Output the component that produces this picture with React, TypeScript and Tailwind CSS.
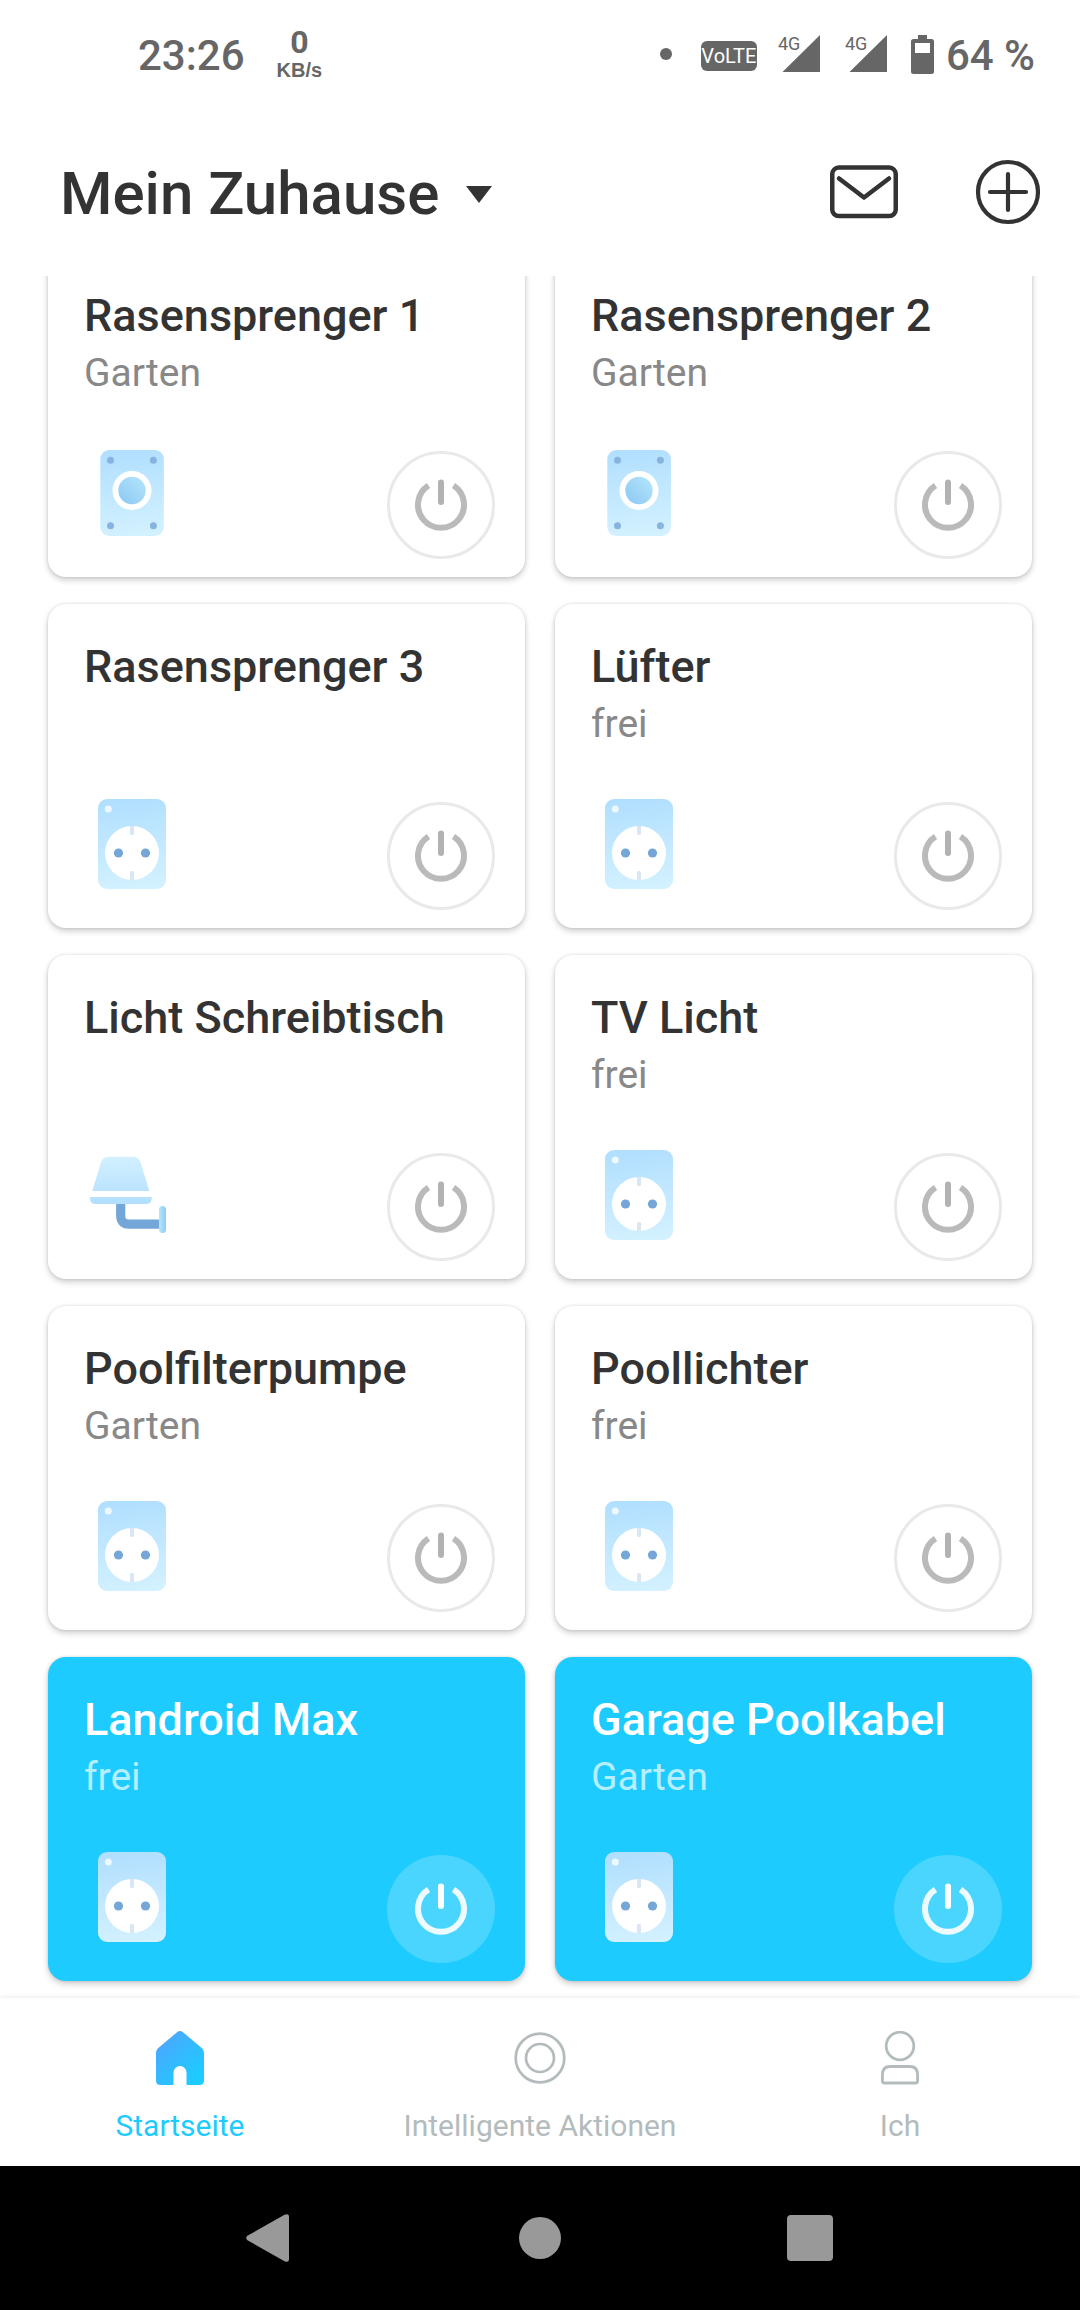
import { useId, useState } from 'react'
import type { ReactNode } from 'react'

type DeviceKind = 'switch' | 'socket' | 'lamp'

interface Device {
  name: string
  room?: string
  kind: DeviceKind
  on?: boolean
}

const DEVICES: Device[] = [
  { name: 'Rasensprenger 1', room: 'Garten', kind: 'switch' },
  { name: 'Rasensprenger 2', room: 'Garten', kind: 'switch' },
  { name: 'Rasensprenger 3', kind: 'socket' },
  { name: 'Lüfter', room: 'frei', kind: 'socket' },
  { name: 'Licht Schreibtisch', kind: 'lamp' },
  { name: 'TV Licht', room: 'frei', kind: 'socket' },
  { name: 'Poolfilterpumpe', room: 'Garten', kind: 'socket' },
  { name: 'Poollichter', room: 'frei', kind: 'socket' },
  { name: 'Landroid Max', room: 'frei', kind: 'socket', on: true },
  { name: 'Garage Poolkabel', room: 'Garten', kind: 'socket', on: true },
]

function SwitchIcon() {
  const id = useId()
  return (
    <svg viewBox="0 0 96 96" className="size-24" aria-hidden="true">
      <defs>
        <linearGradient id={`${id}a`} x1="0.45" y1="0" x2="0.55" y2="1">
          <stop offset="0" stopColor="#b1dfff" />
          <stop offset="1" stopColor="#d3f1ff" />
        </linearGradient>
        <linearGradient id={`${id}b`} x1="1" y1="0" x2="0.1" y2="0.9">
          <stop offset="0" stopColor="#b5e6fb" />
          <stop offset="1" stopColor="#90cbf4" />
        </linearGradient>
      </defs>
      <rect x="16.3" y="5" width="63.6" height="86" rx="9" fill={`url(#${id}a)`} />
      <g fill="#86b3e0">
        <circle cx="26.5" cy="15.3" r="3.5" />
        <circle cx="69.4" cy="15.3" r="3.5" />
        <circle cx="26.5" cy="80.7" r="3.5" />
        <circle cx="69.4" cy="80.7" r="3.5" />
      </g>
      <circle cx="48" cy="45.5" r="19.5" fill="#fff" />
      <circle cx="48" cy="45.5" r="13.7" fill={`url(#${id}b)`} />
    </svg>
  )
}

function SocketIcon() {
  const id = useId()
  return (
    <svg viewBox="0 0 96 96" className="size-24" aria-hidden="true">
      <defs>
        <linearGradient id={id} x1="0.45" y1="0" x2="0.55" y2="1">
          <stop offset="0" stopColor="#b1dfff" />
          <stop offset="1" stopColor="#d3f1ff" />
        </linearGradient>
      </defs>
      <rect x="14" y="3" width="68" height="90" rx="9" fill={`url(#${id})`} />
      <circle cx="24.3" cy="13" r="3.5" fill="#edf8ff" />
      <circle cx="48" cy="57" r="27" fill="#fff" />
      <path
        d="M46 30h4v7.5a1.5 1.5 0 0 1-1.5 1.5h-1a1.5 1.5 0 0 1-1.5-1.5zM46 84h4v-7.5a1.5 1.5 0 0 0-1.5-1.5h-1a1.5 1.5 0 0 0-1.5 1.5z"
        fill="#d8e6f5"
      />
      <circle cx="34.5" cy="57" r="4.6" fill="#74a6d8" />
      <circle cx="61.5" cy="57" r="4.6" fill="#74a6d8" />
    </svg>
  )
}

function LampIcon() {
  const id = useId()
  return (
    <svg viewBox="0 0 96 96" className="size-24" aria-hidden="true">
      <defs>
        <linearGradient id={`${id}a`} x1="0" y1="9" x2="0" y2="57" gradientUnits="userSpaceOnUse">
          <stop offset="0" stopColor="#d3f1ff" />
          <stop offset="1" stopColor="#b1dfff" />
        </linearGradient>
        <linearGradient id={`${id}b`} x1="0" y1="0" x2="1" y2="0">
          <stop offset="0" stopColor="#b5e6fb" />
          <stop offset="1" stopColor="#90cbf4" />
        </linearGradient>
      </defs>
      <path d="M8.3 44 17 15.5Q18.7 9.7 25 9.7H48.5Q54.8 9.7 56.6 15.5L65.3 44z" fill={`url(#${id}a)`} />
      <path d="M6 50H67.7V51.5Q67.7 57 62 57H12Q6 57 6 51.5z" fill={`url(#${id}a)`} />
      <path d="M36.7 57V68.5Q36.7 77.1 45 77.1H76" fill="none" stroke="#74a6d8" strokeWidth="9.2" />
      <rect x="75" y="59" width="7" height="27" rx="3.5" fill={`url(#${id}b)`} />
    </svg>
  )
}

const DEVICE_ICONS: Record<DeviceKind, () => ReactNode> = {
  switch: SwitchIcon,
  socket: SocketIcon,
  lamp: LampIcon,
}

function PowerIcon() {
  return (
    <svg viewBox="-27 -27 54 54" className="size-[54px]" fill="none" stroke="currentColor" strokeWidth="6" aria-hidden="true">
      <path d="M-12.5-19.5A23 23 0 1 0 12.5-19.5" opacity="0.9" />
      <path d="M0-22.5V-3" strokeLinecap="round" />
    </svg>
  )
}

function DeviceCard({ device }: { device: Device }) {
  const [on, setOn] = useState(Boolean(device.on))
  const Icon = DEVICE_ICONS[device.kind]

  return (
    <article
      className={`flex min-h-[324px] flex-col justify-between rounded-[18px] pt-[33px] shadow-[0_0_3px_rgba(0,0,0,0.12),0_3px_6px_rgba(0,0,0,0.2)] ${
        on ? 'bg-[#1dcbff]' : 'bg-white'
      }`}
    >
      <div className="px-9">
        <h2 className={`text-[45px] leading-[60px] font-medium ${on ? 'text-white' : 'text-[#333333]'}`}>
          {device.name}
        </h2>
        {device.room && (
          <p className={`text-[39px] leading-[54px] ${on ? 'text-[#b4eeff]' : 'text-[#888888]'}`}>{device.room}</p>
        )}
      </div>
      <div className="flex items-end justify-between pr-[30px] pb-[18px] pl-9">
        <div className="pb-[18px]">
          <Icon />
        </div>
        <button
          type="button"
          aria-label={`${device.name} ein/aus`}
          aria-pressed={on}
          onClick={() => setOn(!on)}
          className={`flex size-[108px] items-center justify-center rounded-full ${
            on ? 'bg-[#4ad5ff] text-white' : 'border-3 border-[#e8eaea] text-[#b2b2b2]'
          }`}
        >
          <PowerIcon />
        </button>
      </div>
    </article>
  )
}

function SignalIcon() {
  return (
    <div className="relative h-[38px] w-[42px]">
      <svg viewBox="0 0 42 38" className="h-[38px] w-[42px]" aria-hidden="true">
        <path d="M42 0V37H4.5z" fill="#666666" />
      </svg>
      <span className="absolute top-0 left-0 text-[18px] leading-[18px]">4G</span>
    </div>
  )
}

function StatusBar() {
  return (
    <div className="flex h-[108px] items-center justify-between pr-[45px] pl-[138px] text-[#666666]">
      <div className="flex items-center gap-8">
        <span className="pt-1 text-[42px] leading-[54px] font-medium">23:26</span>
        <div className="flex flex-col items-center pb-1 font-bold">
          <span className="text-[32px] leading-[36px]">0</span>
          <span className="font-['Liberation_Sans',sans-serif] text-[20px] leading-[20px]">KB/s</span>
        </div>
      </div>
      <div className="flex items-center">
        <span className="mr-[29px] size-3 rounded-full bg-[#666666]" />
        <span className="mt-1 mr-[21px] flex h-[30px] w-14 items-center justify-center rounded-md bg-[#666666] text-[20px] leading-[30px] text-white">
          VoLTE
        </span>
        <div className="mr-6 flex gap-[25px]">
          <SignalIcon />
          <SignalIcon />
        </div>
        <svg viewBox="0 0 23 39" className="mr-3 h-[39px] w-[23px]" aria-hidden="true">
          <path
            fillRule="evenodd"
            d="M7 0h9v4h4.5A2.5 2.5 0 0 1 23 6.5v30a2.5 2.5 0 0 1-2.5 2.5h-18A2.5 2.5 0 0 1 0 36.5v-30A2.5 2.5 0 0 1 2.5 4H7zM4 8v10h15V8z"
            fill="#666666"
          />
        </svg>
        <span className="pt-1 text-[42px] leading-[54px] font-medium">64 %</span>
      </div>
    </div>
  )
}

function Header() {
  return (
    <header className="flex h-[168px] items-center justify-between pr-[39px] pl-[60px] text-[#333333]">
      <button type="button" className="flex items-center gap-[27px] pt-1">
        <h1 className="text-[60px] leading-[72px] font-medium">Mein Zuhause</h1>
        <svg viewBox="0 0 26 17" className="h-[17px] w-[26px]" aria-hidden="true">
          <path d="M0 0h26L13 17z" fill="currentColor" />
        </svg>
      </button>
      <div className="flex items-center gap-[77px]">
        <button type="button" aria-label="Nachrichten">
          <svg
            viewBox="0 0 68 54"
            className="h-[54px] w-[68px]"
            fill="none"
            stroke="currentColor"
            strokeWidth="4.5"
            strokeLinecap="round"
            strokeLinejoin="round"
            aria-hidden="true"
          >
            <rect x="2.25" y="2.6" width="63.5" height="48.5" rx="6.5" />
            <path d="M9 13.5 34 32.5 59 13.5" />
          </svg>
        </button>
        <button type="button" aria-label="Hinzufügen">
          <svg
            viewBox="-33 -33 66 66"
            className="size-[66px]"
            fill="none"
            stroke="currentColor"
            strokeWidth="4.2"
            strokeLinecap="round"
            aria-hidden="true"
          >
            <circle r="30" />
            <path d="M-18 0H18M0-18V18" />
          </svg>
        </button>
      </div>
    </header>
  )
}

function HomeIcon() {
  const id = useId()
  return (
    <svg viewBox="0 0 54 54" className="size-[54px]" aria-hidden="true">
      <defs>
        <linearGradient id={id} x1="0.1" y1="0.1" x2="0.8" y2="0.9">
          <stop offset="0" stopColor="#4da6ff" />
          <stop offset="1" stopColor="#1dcbff" />
        </linearGradient>
      </defs>
      <path
        d="M24 1.2Q27-1 30 1.2L49 17.3Q51 19 51 22V49.5Q51 54 46.5 54H33.5V41.5A6.5 6.5 0 0 0 20.5 41.5V54H7.5Q3 54 3 49.5V22Q3 19 5 17.3z"
        fill={`url(#${id})`}
      />
    </svg>
  )
}

function ScenesIcon() {
  return (
    <svg viewBox="-27 -27 54 54" className="size-[54px]" fill="none" stroke="currentColor" strokeWidth="2.7" aria-hidden="true">
      <circle r="24.3" />
      <circle r="14" />
    </svg>
  )
}

function ProfileIcon() {
  return (
    <svg viewBox="0 0 54 54" className="size-[54px]" fill="none" stroke="currentColor" strokeWidth="2.8" aria-hidden="true">
      <circle cx="27" cy="15" r="13.8" />
      <path d="M17 35.5H37Q44.6 35.5 44.6 44V50Q44.6 52 42.6 52H11.4Q9.4 52 9.4 50V44Q9.4 35.5 17 35.5z" />
    </svg>
  )
}

const TABS = [
  { label: 'Startseite', icon: HomeIcon, active: true },
  { label: 'Intelligente Aktionen', icon: ScenesIcon, active: false },
  { label: 'Ich', icon: ProfileIcon, active: false },
]

function TabBar() {
  return (
    <nav className="relative grid h-[168px] grid-cols-3 bg-white shadow-[0_0_6px_rgba(0,0,0,0.1)]">
      {TABS.map(({ label, icon: Icon, active }) => (
        <a
          key={label}
          href="#"
          aria-current={active ? 'page' : undefined}
          className={`flex flex-col items-center gap-[23px] pt-[33px] ${active ? 'text-[#1dcbff]' : 'text-[#b3bbbd]'}`}
        >
          <Icon />
          <span className="text-[30px] leading-[36px]">{label}</span>
        </a>
      ))}
    </nav>
  )
}

function SystemBar() {
  return (
    <div className="grid h-36 grid-cols-3 bg-black px-[12.5%] text-[#999999]">
      <button type="button" aria-label="Zurück" className="flex items-center justify-center">
        <svg viewBox="0 0 48 48" className="size-12" fill="currentColor" aria-hidden="true">
          <path d="M3.4 21.8 40.5.8Q45-1 45 3V45Q45 49 40.5 47.2L3.4 26.2Q1 24 3.4 21.8z" transform="translate(-2)" />
        </svg>
      </button>
      <button type="button" aria-label="Startbildschirm" className="flex items-center justify-center">
        <span className="size-[42px] rounded-full bg-[#999999]" />
      </button>
      <button type="button" aria-label="Übersicht" className="flex items-center justify-center">
        <span className="size-[46px] rounded-sm bg-[#999999]" />
      </button>
    </div>
  )
}

export default function App() {
  return (
    <div className="flex min-h-screen flex-col bg-white font-['Roboto',sans-serif]">
      <StatusBar />
      <Header />
      <main className="flex-1 overflow-hidden px-12 pb-[17px]">
        {/* list is scrolled a little, so the first row slides under the header */}
        <div className="-mt-[23px] grid grid-cols-2 gap-x-[30px] gap-y-[27px]">
          {DEVICES.map((device) => (
            <DeviceCard key={device.name} device={device} />
          ))}
        </div>
      </main>
      <TabBar />
      <SystemBar />
    </div>
  )
}
